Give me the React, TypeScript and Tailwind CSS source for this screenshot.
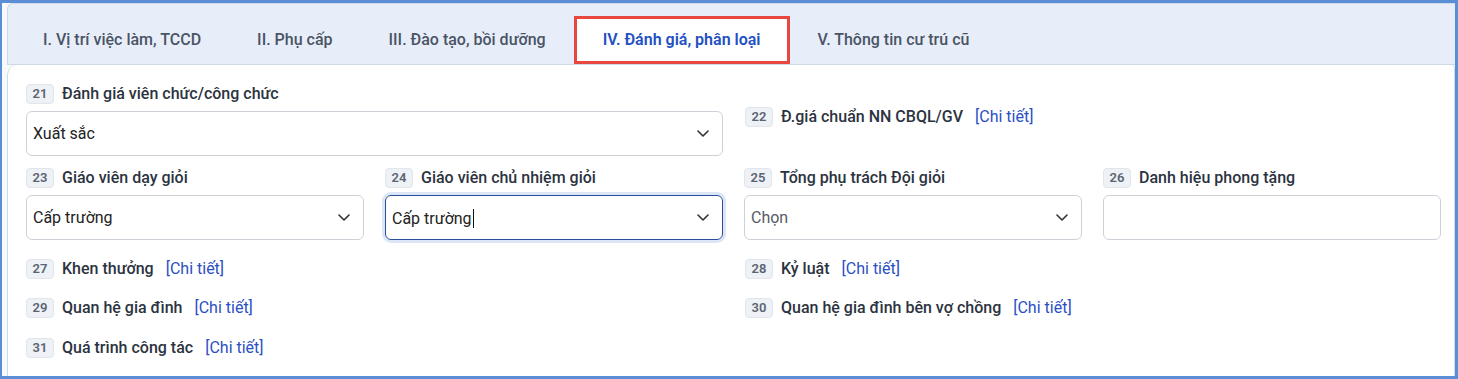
import React from 'react';

const font = { fontFamily: 'Roboto, "Noto Sans", Arial, sans-serif' };

const tabs = [
    'I. Vị trí việc làm, TCCD',
    'II. Phụ cấp',
    'III. Đào tạo, bồi dưỡng',
    'IV. Đánh giá, phân loại',
    'V. Thông tin cư trú cũ',
];

const Badge = ({ n }: { n: string }) => (
    <span className="inline-flex h-[20px] w-[28px] shrink-0 items-center justify-center rounded-[4px] border border-[#e1e5ec] bg-[#eef1f5] text-[13px] font-semibold text-[#5b6473]">
        {n}
    </span>
);

const Label = ({ n, text, link }: { n: string; text: string; link?: boolean }) => (
    <div className="flex h-[20px] items-center">
        <Badge n={n} />
        <span className="ml-[8px] text-[16px] font-medium leading-none text-[#2c3340]">{text}</span>
        {link && <span className="ml-[12px] text-[16px] leading-none text-[#2a4fc4]">[Chi tiết]</span>}
    </div>
);

const Chevron = () => (
    <svg width="12" height="7" viewBox="0 0 12 7" fill="none" className="shrink-0">
        <path d="M1 1L6 6L11 1" stroke="#333" strokeWidth="1.6" strokeLinecap="round" strokeLinejoin="round" />
    </svg>
);

const Select = ({ value, placeholder, focused }: { value?: string; placeholder?: string; focused?: boolean }) => (
    <div
        className={
            focused
                ? 'flex h-[45px] items-center rounded-[6px] border border-[#2c4d9b] pl-[6px] pr-[13px] ring-[3px] ring-[#dde6f6]'
                : 'flex h-[45px] items-center rounded-[6px] border border-[#cdd2d9] pl-[6px] pr-[13px]'
        }
    >
        <span className={value ? 'flex-1 text-[16px] text-[#222]' : 'flex-1 text-[16px] text-[#555b64]'}>
            {value || placeholder}
            {focused && <span className="ml-[1px] inline-block h-[19px] w-[1px] translate-y-[4px] bg-[#111]" />}
        </span>
        <Chevron />
    </div>
);

export default function App() {
    return (
        <div style={font} className="h-[379px] w-[1458px] overflow-hidden border-[3px] border-l-2 border-[#5a8fd8] bg-[#f8f9fb]">
            <div className="flex h-full flex-col pl-[5px]">
                <div className="flex h-[62px] items-end rounded-tl-md border-l border-t border-b border-[#cfd8e6] bg-[#e8eef9] pl-[7px]">
                    {tabs.map((t, i) => (
                        <div
                            key={t}
                            className={
                                i === 3
                                    ? 'flex h-[48px] items-center border-[3px] border-[#e8473f] bg-white px-[26px] text-[16px] font-semibold text-[#2350c2]'
                                    : 'flex h-[48px] items-center border-[3px] border-transparent px-[25px] text-[16px] font-medium text-[#4a5465]'
                            }
                        >
                            {t}
                        </div>
                    ))}
                </div>
                <div className="flex-1 rounded-tl-[10px] rounded-tr-[4px] border-l border-r border-[#d3d9e2] bg-white pl-[18px] pt-[19px]">
                    <div className="grid grid-cols-[338px_338px_338px_338px] gap-x-[21px]">
                        <div className="col-span-2">
                            <Label n="21" text="Đánh giá viên chức/công chức" />
                            <div className="mt-[7px]">
                                <Select value="Xuất sắc" />
                            </div>
                        </div>
                        <div className="col-span-2 pl-[1px] pt-[23px]">
                            <Label n="22" text="Đ.giá chuẩn NN CBQL/GV" link />
                        </div>

                        <div className="mt-[12px]">
                            <Label n="23" text="Giáo viên dạy giỏi" />
                            <div className="mt-[7px]">
                                <Select value="Cấp trường" />
                            </div>
                        </div>
                        <div className="mt-[12px]">
                            <Label n="24" text="Giáo viên chủ nhiệm giỏi" />
                            <div className="mt-[7px]">
                                <Select value="Cấp trường" focused />
                            </div>
                        </div>
                        <div className="mt-[12px]">
                            <Label n="25" text="Tổng phụ trách Đội giỏi" />
                            <div className="mt-[7px]">
                                <Select placeholder="Chọn" />
                            </div>
                        </div>
                        <div className="mt-[12px]">
                            <Label n="26" text="Danh hiệu phong tặng" />
                            <div className="mt-[7px] h-[45px] rounded-[6px] border border-[#cdd2d9]" />
                        </div>

                        <div className="col-span-2 mt-[19px]">
                            <Label n="27" text="Khen thưởng" link />
                        </div>
                        <div className="col-span-2 mt-[19px] pl-[1px]">
                            <Label n="28" text="Kỷ luật" link />
                        </div>

                        <div className="col-span-2 mt-[19px]">
                            <Label n="29" text="Quan hệ gia đình" link />
                        </div>
                        <div className="col-span-2 mt-[19px] pl-[1px]">
                            <Label n="30" text="Quan hệ gia đình bên vợ chồng" link />
                        </div>

                        <div className="col-span-2 mt-[20px]">
                            <Label n="31" text="Quá trình công tác" link />
                        </div>
                    </div>
                </div>
            </div>
        </div>
    );
}
